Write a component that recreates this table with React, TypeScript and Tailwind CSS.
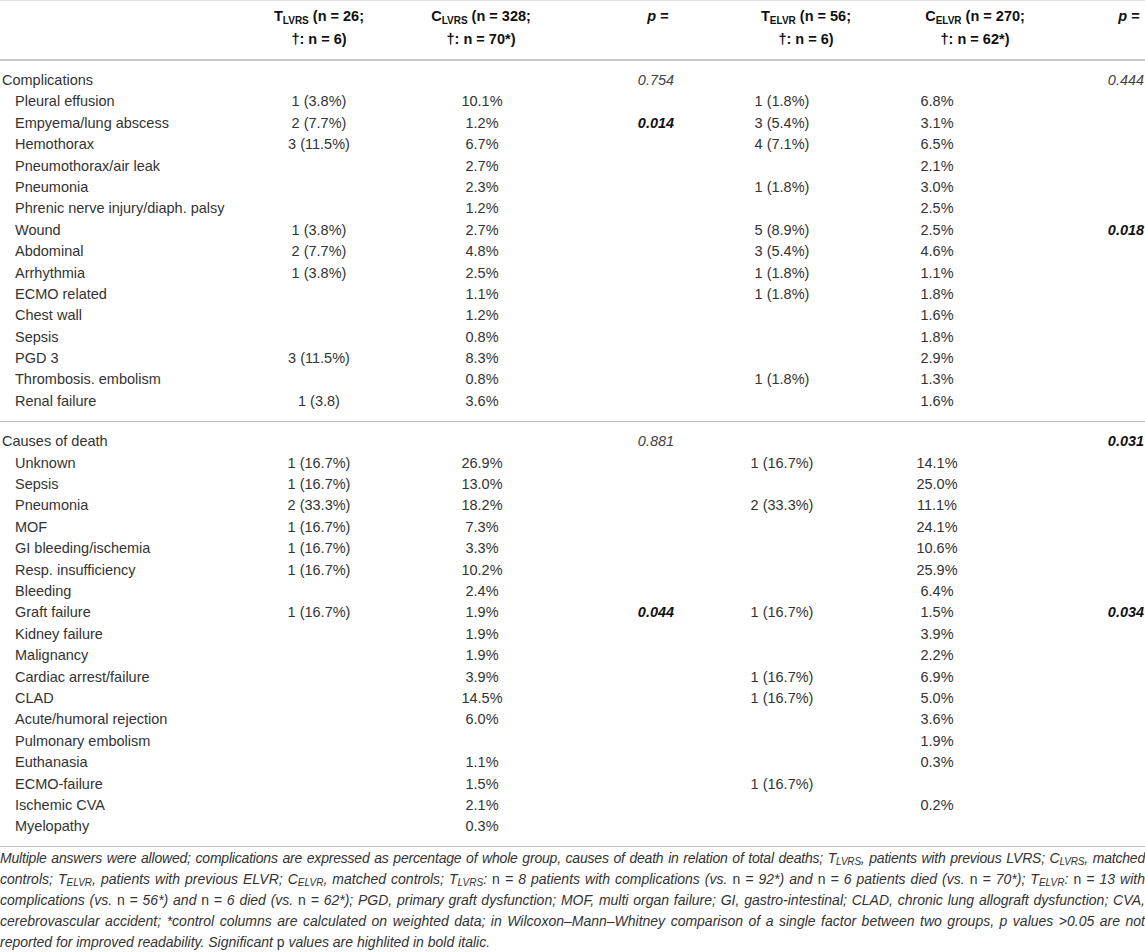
import React from 'react'

// Table: complications and causes of death after transplantation

type PVal = string | { b: string } | undefined

type RowData = {
  label: string
  t1?: string
  c1?: string
  p1?: PVal
  t2?: string
  c2?: string
  p2?: PVal
}

// header and body columns are not quite aligned in the source table
const HEAD_COLS = 'grid grid-cols-[240px_158px_166px_188px_108px_230px_78px] w-[1168px]'
const BODY_COLS = 'grid grid-cols-[240px_158px_168px_180px_72px_238px_140px] w-[1196px]'

const complications: RowData[] = [
  { label: 'Pleural effusion', t1: '1 (3.8%)', c1: '10.1%', t2: '1 (1.8%)', c2: '6.8%' },
  { label: 'Empyema/lung abscess', t1: '2 (7.7%)', c1: '1.2%', p1: { b: '0.014' }, t2: '3 (5.4%)', c2: '3.1%' },
  { label: 'Hemothorax', t1: '3 (11.5%)', c1: '6.7%', t2: '4 (7.1%)', c2: '6.5%' },
  { label: 'Pneumothorax/air leak', c1: '2.7%', c2: '2.1%' },
  { label: 'Pneumonia', c1: '2.3%', t2: '1 (1.8%)', c2: '3.0%' },
  { label: 'Phrenic nerve injury/diaph. palsy', c1: '1.2%', c2: '2.5%' },
  { label: 'Wound', t1: '1 (3.8%)', c1: '2.7%', t2: '5 (8.9%)', c2: '2.5%', p2: { b: '0.018' } },
  { label: 'Abdominal', t1: '2 (7.7%)', c1: '4.8%', t2: '3 (5.4%)', c2: '4.6%' },
  { label: 'Arrhythmia', t1: '1 (3.8%)', c1: '2.5%', t2: '1 (1.8%)', c2: '1.1%' },
  { label: 'ECMO related', c1: '1.1%', t2: '1 (1.8%)', c2: '1.8%' },
  { label: 'Chest wall', c1: '1.2%', c2: '1.6%' },
  { label: 'Sepsis', c1: '0.8%', c2: '1.8%' },
  { label: 'PGD 3', t1: '3 (11.5%)', c1: '8.3%', c2: '2.9%' },
  { label: 'Thrombosis. embolism', c1: '0.8%', t2: '1 (1.8%)', c2: '1.3%' },
  { label: 'Renal failure', t1: '1 (3.8)', c1: '3.6%', c2: '1.6%' },
]

const deaths: RowData[] = [
  { label: 'Unknown', t1: '1 (16.7%)', c1: '26.9%', t2: '1 (16.7%)', c2: '14.1%' },
  { label: 'Sepsis', t1: '1 (16.7%)', c1: '13.0%', c2: '25.0%' },
  { label: 'Pneumonia', t1: '2 (33.3%)', c1: '18.2%', t2: '2 (33.3%)', c2: '11.1%' },
  { label: 'MOF', t1: '1 (16.7%)', c1: '7.3%', c2: '24.1%' },
  { label: 'GI bleeding/ischemia', t1: '1 (16.7%)', c1: '3.3%', c2: '10.6%' },
  { label: 'Resp. insufficiency', t1: '1 (16.7%)', c1: '10.2%', c2: '25.9%' },
  { label: 'Bleeding', c1: '2.4%', c2: '6.4%' },
  { label: 'Graft failure', t1: '1 (16.7%)', c1: '1.9%', p1: { b: '0.044' }, t2: '1 (16.7%)', c2: '1.5%', p2: { b: '0.034' } },
  { label: 'Kidney failure', c1: '1.9%', c2: '3.9%' },
  { label: 'Malignancy', c1: '1.9%', c2: '2.2%' },
  { label: 'Cardiac arrest/failure', c1: '3.9%', t2: '1 (16.7%)', c2: '6.9%' },
  { label: 'CLAD', c1: '14.5%', t2: '1 (16.7%)', c2: '5.0%' },
  { label: 'Acute/humoral rejection', c1: '6.0%', c2: '3.6%' },
  { label: 'Pulmonary embolism', c2: '1.9%' },
  { label: 'Euthanasia', c1: '1.1%', c2: '0.3%' },
  { label: 'ECMO-failure', c1: '1.5%', t2: '1 (16.7%)' },
  { label: 'Ischemic CVA', c1: '2.1%', c2: '0.2%' },
  { label: 'Myelopathy', c1: '0.3%' },
]

const PCell = ({ p }: { p: PVal }) => {
  if (!p) return <div />
  if (typeof p === 'string') return <div className="text-center italic text-[#444]">{p}</div>
  return <div className="text-center italic font-bold text-[#111]">{p.b}</div>
}

const Row = ({ r, heading }: { r: RowData; heading?: boolean }) => (
  <div className={`${BODY_COLS} h-[21.4px] leading-[21.4px] whitespace-nowrap`}>
    <div className={heading ? 'pl-[2px]' : 'pl-[15px]'}>{r.label}</div>
    <div className="text-center">{r.t1}</div>
    <div className="text-center">{r.c1}</div>
    <PCell p={r.p1} />
    <div className="text-center">{r.t2}</div>
    <div className="text-center">{r.c2}</div>
    <PCell p={r.p2} />
  </div>
)

const Sub = ({ children }: { children: React.ReactNode }) => (
  <sub className="text-[10px]">{children}</sub>
)

const HeadCell = ({ g, sub, n, d }: { g: string; sub: string; n: string; d: string }) => (
  <div className="text-center whitespace-nowrap">
    <div>
      {g}
      <Sub>{sub}</Sub> (n = {n};
    </div>
    <div>†: n = {d})</div>
  </div>
)

const PHead = () => (
  <div className="text-center">
    <i>p</i> =
  </div>
)

const Up = ({ children }: { children: React.ReactNode }) => <span className="not-italic">{children}</span>

const LINE = 'whitespace-nowrap text-justify [text-align-last:justify]'

export default function App() {
  return (
    <div className="w-[1145px] overflow-hidden bg-white font-['Liberation_Sans',Arial,sans-serif] text-[14.5px] text-[#333]">
      {/* header */}
      <div className="border-t border-[#e2e2e2] border-b-2 border-b-[#c9c9c9] pt-[4px] pb-[8px]">
        <div className={`${HEAD_COLS} leading-[23px] font-bold text-[#111]`}>
          <div />
          <HeadCell g="T" sub="LVRS" n="26" d="6" />
          <HeadCell g="C" sub="LVRS" n="328" d="70*" />
          <PHead />
          <HeadCell g="T" sub="ELVR" n="56" d="6" />
          <HeadCell g="C" sub="ELVR" n="270" d="62*" />
          <PHead />
        </div>
      </div>

      {/* complications */}
      <div className="border-b border-[#bdbdbd] pt-[9px] pb-[9px]">
        <Row r={{ label: 'Complications', p1: '0.754', p2: '0.444' }} heading />
        {complications.map((r, i) => (
          <Row key={i} r={r} />
        ))}
      </div>

      {/* causes of death */}
      <div className="border-b border-[#bdbdbd] pt-[9px] pb-[8px]">
        <Row r={{ label: 'Causes of death', p1: '0.881', p2: { b: '0.031' } }} heading />
        {deaths.map((r, i) => (
          <Row key={i} r={r} />
        ))}
      </div>

      {/* footnote */}
      <div className="pt-[1px] italic text-[14px] leading-[21px] text-[#333]">
        <div className={`${LINE} tracking-[-0.2px] [word-spacing:-1px]`}>
          Multiple answers were allowed; complications are expressed as percentage of whole group, causes of death in relation of total deaths; T<Sub>LVRS</Sub>, patients with previous LVRS; C<Sub>LVRS</Sub>, matched
        </div>
        <div className={LINE}>
          controls; T<Sub>ELVR</Sub>, patients with previous ELVR; C<Sub>ELVR</Sub>, matched controls; T<Sub>LVRS</Sub>: <Up>n</Up> = 8 patients with complications (vs. <Up>n</Up> = 92*) and <Up>n</Up> = 6 patients died (vs. <Up>n</Up> = 70*); T<Sub>ELVR</Sub>: <Up>n</Up> = 13 with
        </div>
        <div className={LINE}>
          complications (vs. <Up>n</Up> = 56*) and <Up>n</Up> = 6 died (vs. <Up>n</Up> = 62*); PGD, primary graft dysfunction; MOF, multi organ failure; GI, gastro-intestinal; CLAD, chronic lung allograft dysfunction; CVA,
        </div>
        <div className={LINE}>
          cerebrovascular accident; *control columns are calculated on weighted data; in Wilcoxon–Mann–Whitney comparison of a single factor between two groups, p values &gt;0.05 are not
        </div>
        <div className="whitespace-nowrap">
          reported for improved readability. Significant <Up>p</Up> values are highlited in bold italic.
        </div>
      </div>
    </div>
  )
}
